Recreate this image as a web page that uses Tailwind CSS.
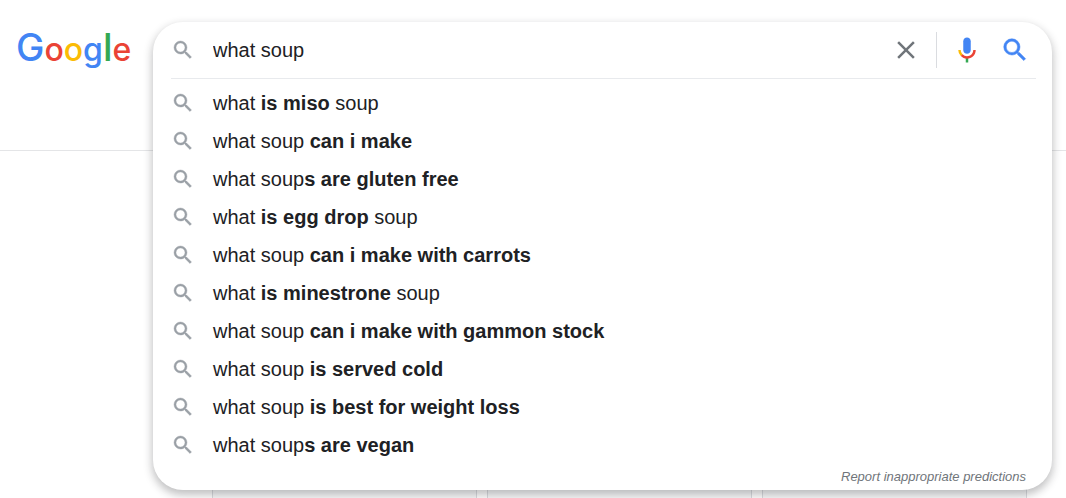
<!DOCTYPE html>
<html lang="en">
<head>
    <meta charset="UTF-8">
    <meta name="viewport" content="width=device-width, initial-scale=1.0">
    <title>what soup - Google Search</title>
    <script src="https://cdn.jsdelivr.net/npm/@tailwindcss/browser@4"></script>
</head>
<body class="flex flex-col h-screen overflow-hidden bg-white text-[#202124] font-['Liberation_Sans',Arial,sans-serif]">
    <!-- Shared search icon -->
    <svg class="hidden">
        <symbol id="search" viewBox="0 0 24 24">
            <path fill="currentColor" stroke="currentColor" stroke-width=".4" d="M15.5 14h-.79l-.28-.27A6.471 6.471 0 0 0 16 9.5 6.5 6.5 0 1 0 9.5 16c1.61 0 3.09-.59 4.23-1.57l.27.28v.79l5 4.99L20.49 19l-4.99-5zm-6 0C7.01 14 5 11.99 5 9.5S7.01 5 9.5 5 14 7.01 14 9.5 11.99 14 9.5 14z"/>
        </symbol>
    </svg>

    <header class="flex shrink-0 h-[151px] pt-[22px] pr-[14px] border-b border-[#e4e5e7]">
        <a href="#" aria-label="Google" class="w-[153px] h-14 pl-4 pt-1 flex items-baseline shrink-0 font-['Inter',sans-serif] font-medium text-[32px]">
            <span class="text-[#4285f4] text-[38px] leading-10">G</span><span class="text-[#ea4335]">o</span><span class="text-[#fbbc05]">o</span><span class="text-[#4285f4]">g</span><span class="text-[#34a853] text-[38px] leading-10">l</span><span class="text-[#ea4335]">e</span>
        </a>

        <div class="relative flex-1">
            <!-- Search box with its suggestions, lies over the page -->
            <form class="absolute inset-x-0 top-0 z-10 bg-white rounded-[30px] shadow-[0_4px_8px_1px_rgba(32,33,36,0.28)]">
                <div class="flex items-center h-14 pl-[18px] pr-[22px]">
                    <svg class="size-6 text-[#9aa0a6] shrink-0"><use href="#search"/></svg>
                    <input type="text" aria-label="Search" value="what soup" class="flex-1 min-w-0 ml-[18px] text-[20px] leading-6 outline-none">
                    <button type="button" aria-label="Clear" class="text-[#70757a]">
                        <svg class="size-[30px]" viewBox="0 0 24 24"><path fill="currentColor" d="M19 6.41L17.59 5 12 10.59 6.41 5 5 6.41 10.59 12 5 17.59 6.41 19 12 13.41 17.59 19 19 17.59 13.41 12z"/></svg>
                    </button>
                    <span class="w-px h-9 mx-[15px] bg-[#dadce0]"></span>
                    <button type="button" aria-label="Search by voice">
                        <svg class="size-[30px]" viewBox="0 0 24 24">
                            <path fill="#4285f4" d="M12 15c1.66 0 3-1.31 3-2.97V4.97C15 3.31 13.66 2 12 2S9 3.31 9 4.97v7.06C9 13.69 10.34 15 12 15z"/>
                            <path fill="#34a853" d="M11 18.08h2V22h-2z"/>
                            <path fill="#fbbc05" d="M7.05 16.87A6.8 6.8 0 0 1 5 12h2c0 1.45.56 2.42 1.47 3.38v.32l-1.15 1.18z"/>
                            <path fill="#ea4335" d="M12 16.93a4.97 4.97 0 0 1-3.54-1.55l-1.41 1.49C8.31 18.14 9.99 19 12 19c3.87 0 6.99-2.92 6.99-7h-1.99c0 2.92-2.24 4.93-5 4.93z"/>
                        </svg>
                    </button>
                    <button type="submit" aria-label="Google Search" class="ml-[18px] text-[#4285f4]">
                        <svg class="size-[30px]"><use href="#search"/></svg>
                    </button>
                </div>
                <div class="h-px ml-[18px] mr-4 bg-[#e8eaed]"></div>

                <ul class="pt-[5px] text-[20px] leading-[38px] whitespace-nowrap">
                    <li><a href="#" class="flex items-center pl-[18px] gap-[18px]"><svg class="size-6 text-[#9aa0a6]"><use href="#search"/></svg><span>what <b>is miso</b> soup</span></a></li>
                    <li><a href="#" class="flex items-center pl-[18px] gap-[18px]"><svg class="size-6 text-[#9aa0a6]"><use href="#search"/></svg><span>what soup <b>can i make</b></span></a></li>
                    <li><a href="#" class="flex items-center pl-[18px] gap-[18px]"><svg class="size-6 text-[#9aa0a6]"><use href="#search"/></svg><span>what soup<b>s are gluten free</b></span></a></li>
                    <li><a href="#" class="flex items-center pl-[18px] gap-[18px]"><svg class="size-6 text-[#9aa0a6]"><use href="#search"/></svg><span>what <b>is egg drop</b> soup</span></a></li>
                    <li><a href="#" class="flex items-center pl-[18px] gap-[18px]"><svg class="size-6 text-[#9aa0a6]"><use href="#search"/></svg><span>what soup <b>can i make with carrots</b></span></a></li>
                    <li><a href="#" class="flex items-center pl-[18px] gap-[18px]"><svg class="size-6 text-[#9aa0a6]"><use href="#search"/></svg><span>what <b>is minestrone</b> soup</span></a></li>
                    <li><a href="#" class="flex items-center pl-[18px] gap-[18px]"><svg class="size-6 text-[#9aa0a6]"><use href="#search"/></svg><span>what soup <b>can i make with gammon stock</b></span></a></li>
                    <li><a href="#" class="flex items-center pl-[18px] gap-[18px]"><svg class="size-6 text-[#9aa0a6]"><use href="#search"/></svg><span>what soup <b>is served cold</b></span></a></li>
                    <li><a href="#" class="flex items-center pl-[18px] gap-[18px]"><svg class="size-6 text-[#9aa0a6]"><use href="#search"/></svg><span>what soup <b>is best for weight loss</b></span></a></li>
                    <li><a href="#" class="flex items-center pl-[18px] gap-[18px]"><svg class="size-6 text-[#9aa0a6]"><use href="#search"/></svg><span>what soup<b>s are vegan</b></span></a></li>
                </ul>
                <div class="flex justify-end pt-1 pb-1 pr-[26px]">
                    <a href="#" class="text-[13px] leading-[18px] italic text-[#70757a]">Report inappropriate predictions</a>
                </div>
            </form>
        </div>
    </header>

    <!-- Result cards, mostly hidden behind the suggestions -->
    <main class="flex-1 grid grid-cols-3 gap-[10px] pl-[212px] pr-[39px]">
        <div class="border-x border-[#dadce0] bg-[#f8f9fa]"></div>
        <div class="border-x border-[#dadce0] bg-[#f8f9fa]"></div>
        <div class="border-x border-[#dadce0] bg-[#f8f9fa]"></div>
    </main>
</body>
</html>
